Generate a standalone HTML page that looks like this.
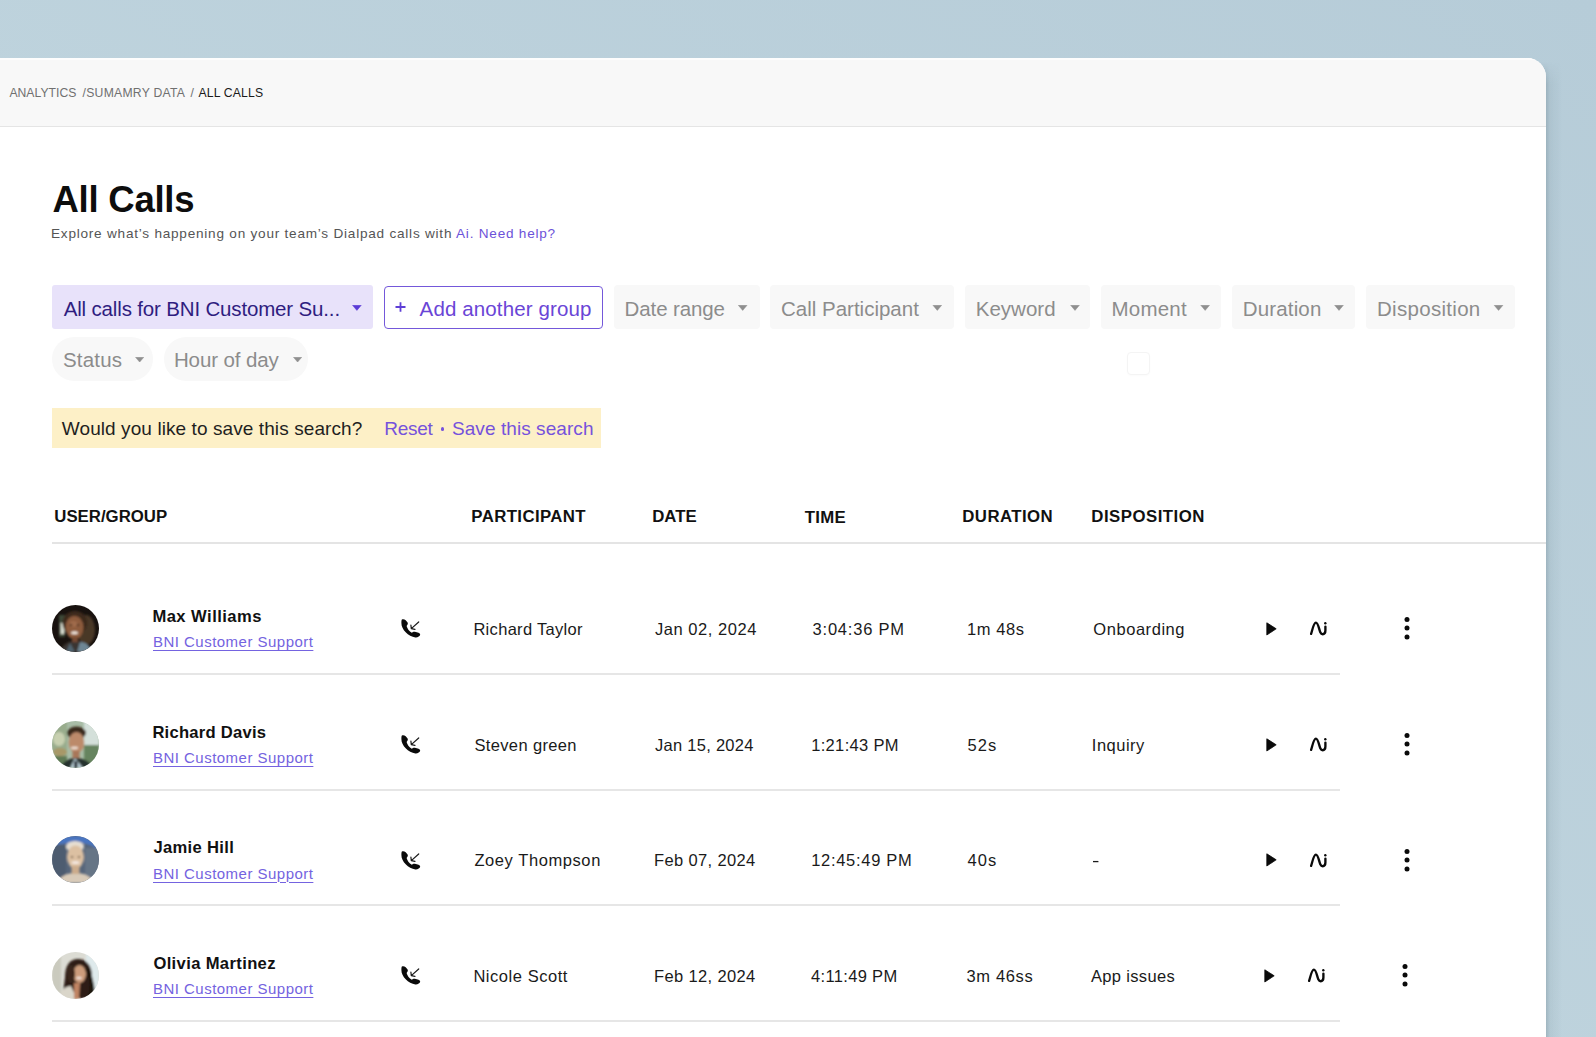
<!DOCTYPE html>
<html><head><meta charset="utf-8"><title>All Calls</title>
<style>
*{margin:0;padding:0;box-sizing:border-box}
html,body{width:1596px;height:1037px;overflow:hidden}
body{background:linear-gradient(to bottom left,#b6ccd8,#bed3dd 55%,#c4d8e0);font-family:"Liberation Sans",sans-serif;position:relative}
.card{position:absolute;left:-30px;top:58px;width:1576.4px;height:1100px;background:#fff;border-top-right-radius:19px;overflow:hidden}
.shadow{position:absolute;left:1540px;top:62px;width:30px;height:1000px;background:linear-gradient(to right,rgba(95,118,130,.30) 0,rgba(95,118,130,.30) 6px,rgba(95,118,130,.10) 10px,rgba(95,118,130,0) 22px);-webkit-mask-image:linear-gradient(to bottom,transparent,#000 22px)}
.hdr{position:absolute;left:0;top:0;width:100%;height:69px;background:#f8f8f8;border-bottom:1.3px solid #e5e5e5;box-shadow:inset 0 2px 0 #fdfdfd}
.t{position:absolute;white-space:nowrap}
.box{position:absolute;display:block}
.av{width:47px;height:47px;border-radius:50%;overflow:hidden}
.av svg{display:block}
</style></head><body>
<div class="shadow"></div>
<div class="card"><div class="hdr"></div></div>
<div class="box" style="left:52.0px;top:285.2px;width:321.4px;height:43.9px;background:#e8e2fa;border-radius:3px;"></div>
<svg class="box" style="left:352.4px;top:305.0px" width="9.8" height="5.6" viewBox="0 0 10 6"><path d="M0.3 0.3 L9.7 0.3 L5 5.8 Z" fill="#5a3bd6" stroke="#5a3bd6" stroke-width="0.5" stroke-linejoin="round"/></svg>
<div class="box" style="left:383.8px;top:285.5px;width:218.8px;height:43.9px;background:#fff;border-radius:4px;border:1.8px solid #7458da;box-sizing:border-box;"></div>
<svg class="box" style="left:395.4px;top:301.6px" width="11" height="10" viewBox="0 0 11 10"><path d="M5.5 0.3V9.7M0.5 5H10.5" stroke="#5e3ed6" stroke-width="1.8"/></svg>
<div class="box" style="left:613.6px;top:285.3px;width:146.1px;height:44.0px;background:#f8f8f8;border-radius:4px;"></div>
<svg class="box" style="left:737.0px;top:305.0px" width="11.4" height="5.6" viewBox="0 0 10 6"><path d="M0.3 0.3 L9.7 0.3 L5 5.8 Z" fill="#8f8f8f" stroke="#8f8f8f" stroke-width="0.5" stroke-linejoin="round"/></svg>
<div class="box" style="left:770.0px;top:285.3px;width:183.5px;height:44.0px;background:#f8f8f8;border-radius:4px;"></div>
<svg class="box" style="left:932.4px;top:305.0px" width="10.6" height="5.6" viewBox="0 0 10 6"><path d="M0.3 0.3 L9.7 0.3 L5 5.8 Z" fill="#8f8f8f" stroke="#8f8f8f" stroke-width="0.5" stroke-linejoin="round"/></svg>
<div class="box" style="left:965.0px;top:285.3px;width:125.3px;height:44.0px;background:#f8f8f8;border-radius:4px;"></div>
<svg class="box" style="left:1069.5px;top:305.0px" width="10.0" height="5.6" viewBox="0 0 10 6"><path d="M0.3 0.3 L9.7 0.3 L5 5.8 Z" fill="#8f8f8f" stroke="#8f8f8f" stroke-width="0.5" stroke-linejoin="round"/></svg>
<div class="box" style="left:1101.0px;top:285.3px;width:120.0px;height:44.0px;background:#f8f8f8;border-radius:4px;"></div>
<svg class="box" style="left:1199.7px;top:305.0px" width="10.3" height="5.6" viewBox="0 0 10 6"><path d="M0.3 0.3 L9.7 0.3 L5 5.8 Z" fill="#8f8f8f" stroke="#8f8f8f" stroke-width="0.5" stroke-linejoin="round"/></svg>
<div class="box" style="left:1232.0px;top:285.3px;width:122.7px;height:44.0px;background:#f8f8f8;border-radius:4px;"></div>
<svg class="box" style="left:1334.0px;top:305.0px" width="10.0" height="5.6" viewBox="0 0 10 6"><path d="M0.3 0.3 L9.7 0.3 L5 5.8 Z" fill="#8f8f8f" stroke="#8f8f8f" stroke-width="0.5" stroke-linejoin="round"/></svg>
<div class="box" style="left:1365.7px;top:285.3px;width:148.9px;height:44.0px;background:#f8f8f8;border-radius:4px;"></div>
<svg class="box" style="left:1492.5px;top:305.0px" width="11.1" height="5.6" viewBox="0 0 10 6"><path d="M0.3 0.3 L9.7 0.3 L5 5.8 Z" fill="#8f8f8f" stroke="#8f8f8f" stroke-width="0.5" stroke-linejoin="round"/></svg>
<div class="box" style="left:52.4px;top:337.0px;width:100.4px;height:44.0px;background:#f8f8f8;border-radius:22px;"></div>
<svg class="box" style="left:134.6px;top:356.7px" width="9.3" height="5.3" viewBox="0 0 10 6"><path d="M0.3 0.3 L9.7 0.3 L5 5.8 Z" fill="#8f8f8f" stroke="#8f8f8f" stroke-width="0.5" stroke-linejoin="round"/></svg>
<div class="box" style="left:163.6px;top:337.0px;width:144.8px;height:44.0px;background:#f8f8f8;border-radius:22px;"></div>
<svg class="box" style="left:293.3px;top:356.7px" width="9.2" height="5.3" viewBox="0 0 10 6"><path d="M0.3 0.3 L9.7 0.3 L5 5.8 Z" fill="#8f8f8f" stroke="#8f8f8f" stroke-width="0.5" stroke-linejoin="round"/></svg>
<div class="box" style="left:1127px;top:352px;width:23px;height:23px;border:1px solid #f4f4f4;border-radius:4px;box-shadow:0 1px 2px rgba(0,0,0,.02)"></div>
<div class="box" style="left:51.6px;top:407.7px;width:549.8px;height:40.0px;background:#fdf0c7;border-radius:0px;"></div>
<div class="box" style="left:440.5px;top:427px;width:3.5px;height:3.5px;border-radius:50%;background:#7652dc"></div>
<div class="box" style="left:52px;top:542.2px;width:1494px;height:2px;background:#e4e4e4"></div>
<div class="box" style="left:52px;top:672.8px;width:1288.3px;height:2px;background:#e6e6e6"></div>
<div class="box av" style="left:51.7px;top:605.0px"><svg width="47" height="47" viewBox="0 0 47 47"><defs><filter id="bl1" x="-20%" y="-20%" width="140%" height="140%"><feGaussianBlur stdDeviation="1.0"/></filter></defs><rect width="47" height="47" fill="#18120f"/><g filter="url(#bl1)"><rect x="7" y="10" width="6" height="22" fill="#3e4838"/><rect x="8.5" y="18" width="4" height="11" fill="#d8dcd0"/><ellipse cx="34" cy="25" rx="9" ry="15" fill="#4a3828"/><path d="M8 47 C10 39 17 36 23 36 C30 36 37 38 40 47 Z" fill="#3a3430"/><path d="M25 47 L28 37 C33 37 38 40 41 47 Z" fill="#6e8694"/><path d="M14 47 L18 38 L23 47 Z" fill="#506470"/><ellipse cx="23" cy="18" rx="12.5" ry="12" fill="#3e2c1e"/><ellipse cx="22.5" cy="22.5" rx="9" ry="11.5" fill="#8e5c3e"/><ellipse cx="21.5" cy="19" rx="4" ry="3" fill="#a06c4c"/><ellipse cx="22.5" cy="27.8" rx="3.4" ry="1.5" fill="#f0e6de"/><ellipse cx="19" cy="20" rx="1.3" ry="0.8" fill="#2a1a12"/><ellipse cx="26" cy="20" rx="1.3" ry="0.8" fill="#2a1a12"/><rect x="20" y="32" width="6" height="5" fill="#764a30"/></g></svg>
</div>
<svg class="box" style="left:399.7px;top:618.3px" width="22" height="22" viewBox="0 0 22 22"><path d="M1.9 1.6 C3.8 0.4 6.6 2.6 7.6 4.6 C8.2 5.8 7.6 7.0 6.6 8.0 C7.4 10.8 9.2 13.4 11.8 14.8 C12.4 14.2 13.6 13.5 14.8 13.7 C17.5 14.2 20.2 15.0 20.2 16.6 C20.0 18.5 17.5 19.6 15.4 19.4 C8.5 18.5 1.2 11.5 1.4 5.0 C1.4 3.5 1.5 2.2 1.9 1.6 Z" fill="#0a0a0a"/><path d="M18.7 4.0 L11.3 10.6 M10.9 7.1 L11.3 10.6 L15.0 11.4" fill="none" stroke="#1a1a1a" stroke-width="1.2" stroke-linecap="round" stroke-linejoin="round"/></svg>
<svg class="box" style="left:1265.6px;top:621.8px" width="11" height="14" viewBox="0 0 11 14"><path d="M0.8 0.8 L10.2 6.8 L0.8 13 Z" fill="#0a0a0a" stroke="#0a0a0a" stroke-width="0.8" stroke-linejoin="round"/></svg>
<svg class="box" style="left:1309.1px;top:620.3px" width="20" height="18" viewBox="0 0 20 18"><path d="M2.1 13.9 C3.4 10 4.6 2.6 6.9 2.6 C9.1 2.6 10.1 9.6 11.3 12.3 C12 13.8 12.8 14.2 13.7 14.2 C15.3 14.2 16.4 13.1 16.4 10.6 L16.4 6.6" fill="none" stroke="#0a0a0a" stroke-width="2.35" stroke-linecap="round" stroke-linejoin="round"/><circle cx="16.3" cy="3.2" r="1.2" fill="#0a0a0a"/></svg>
<svg class="box" style="left:1403.0px;top:616.2px" width="8" height="24" viewBox="0 0 8 24"><circle cx="4" cy="3.5" r="2.5" fill="#0a0a0a"/><circle cx="4" cy="12.1" r="2.5" fill="#0a0a0a"/><circle cx="4" cy="20.9" r="2.5" fill="#0a0a0a"/></svg>
<div class="box" style="left:52px;top:788.5px;width:1288.3px;height:2px;background:#e6e6e6"></div>
<div class="box av" style="left:51.7px;top:720.7px">
<svg width="47" height="47" viewBox="0 0 47 47"><defs><filter id="bl2" x="-20%" y="-20%" width="140%" height="140%"><feGaussianBlur stdDeviation="1.3"/></filter></defs><rect width="47" height="47" fill="#a8bca6"/><g filter="url(#bl2)"><rect x="0" y="0" width="15" height="47" fill="#98ac8c"/><ellipse cx="7" cy="18" rx="6" ry="7" fill="#c8d0b0"/><ellipse cx="8" cy="31" rx="7" ry="4" fill="#a89868"/><rect x="0" y="35" width="15" height="12" fill="#5e7a54"/><rect x="32" y="0" width="15" height="24" fill="#d4e0da"/><rect x="32" y="24" width="15" height="23" fill="#66845e"/><path d="M8 47 C11 40 18 37 23.5 37 C30 37 37 39 41 47 Z" fill="#26322e"/><path d="M18 47 L23 37 L31 47 Z" fill="#b4c8d0"/><rect x="22.3" y="40" width="3" height="7" fill="#101820"/><ellipse cx="24.5" cy="12" rx="9.5" ry="6.5" fill="#3a2a1e"/><ellipse cx="24.5" cy="21.5" rx="7.8" ry="10.5" fill="#bc8a6a"/><ellipse cx="22.5" cy="27" rx="3.6" ry="1.4" fill="#ecdcd0"/><rect x="20.5" y="30" width="7" height="7" fill="#a87658"/></g></svg>
</div>
<svg class="box" style="left:399.7px;top:734.0px" width="22" height="22" viewBox="0 0 22 22"><path d="M1.9 1.6 C3.8 0.4 6.6 2.6 7.6 4.6 C8.2 5.8 7.6 7.0 6.6 8.0 C7.4 10.8 9.2 13.4 11.8 14.8 C12.4 14.2 13.6 13.5 14.8 13.7 C17.5 14.2 20.2 15.0 20.2 16.6 C20.0 18.5 17.5 19.6 15.4 19.4 C8.5 18.5 1.2 11.5 1.4 5.0 C1.4 3.5 1.5 2.2 1.9 1.6 Z" fill="#0a0a0a"/><path d="M18.7 4.0 L11.3 10.6 M10.9 7.1 L11.3 10.6 L15.0 11.4" fill="none" stroke="#1a1a1a" stroke-width="1.2" stroke-linecap="round" stroke-linejoin="round"/></svg>
<svg class="box" style="left:1265.6px;top:737.5px" width="11" height="14" viewBox="0 0 11 14"><path d="M0.8 0.8 L10.2 6.8 L0.8 13 Z" fill="#0a0a0a" stroke="#0a0a0a" stroke-width="0.8" stroke-linejoin="round"/></svg>
<svg class="box" style="left:1309.1px;top:736.0px" width="20" height="18" viewBox="0 0 20 18"><path d="M2.1 13.9 C3.4 10 4.6 2.6 6.9 2.6 C9.1 2.6 10.1 9.6 11.3 12.3 C12 13.8 12.8 14.2 13.7 14.2 C15.3 14.2 16.4 13.1 16.4 10.6 L16.4 6.6" fill="none" stroke="#0a0a0a" stroke-width="2.35" stroke-linecap="round" stroke-linejoin="round"/><circle cx="16.3" cy="3.2" r="1.2" fill="#0a0a0a"/></svg>
<svg class="box" style="left:1403.0px;top:731.9px" width="8" height="24" viewBox="0 0 8 24"><circle cx="4" cy="3.5" r="2.5" fill="#0a0a0a"/><circle cx="4" cy="12.1" r="2.5" fill="#0a0a0a"/><circle cx="4" cy="20.9" r="2.5" fill="#0a0a0a"/></svg>
<div class="box" style="left:52px;top:904.2px;width:1288.3px;height:2px;background:#e6e6e6"></div>
<div class="box av" style="left:51.7px;top:836.4px">
<svg width="47" height="47" viewBox="0 0 47 47"><defs><filter id="bl3" x="-20%" y="-20%" width="140%" height="140%"><feGaussianBlur stdDeviation="1.3"/></filter></defs><rect width="47" height="47" fill="#56657a"/><g filter="url(#bl3)"><path d="M0 0 H47 V14 C38 8 30 6 20 7 L0 9 Z" fill="#4a74c0"/><rect x="0" y="9" width="14" height="38" fill="#4e5c70"/><rect x="33" y="12" width="14" height="35" fill="#667486"/><path d="M5 47 C8 40 15 37 23.5 37 C32 37 39 40 42 47 Z" fill="#d8cab8"/><ellipse cx="23" cy="10.5" rx="9" ry="5.5" fill="#e6ded2"/><ellipse cx="23.5" cy="21" rx="8.5" ry="11.5" fill="#dcc0a2"/><rect x="19.5" y="30" width="8" height="8" fill="#ccac8c"/><ellipse cx="23.5" cy="26.5" rx="4" ry="1.5" fill="#f4e8e0"/><ellipse cx="20" cy="21" rx="1.3" ry="0.7" fill="#5a4030"/><ellipse cx="27" cy="21" rx="1.3" ry="0.7" fill="#5a4030"/></g></svg>
</div>
<svg class="box" style="left:399.7px;top:849.7px" width="22" height="22" viewBox="0 0 22 22"><path d="M1.9 1.6 C3.8 0.4 6.6 2.6 7.6 4.6 C8.2 5.8 7.6 7.0 6.6 8.0 C7.4 10.8 9.2 13.4 11.8 14.8 C12.4 14.2 13.6 13.5 14.8 13.7 C17.5 14.2 20.2 15.0 20.2 16.6 C20.0 18.5 17.5 19.6 15.4 19.4 C8.5 18.5 1.2 11.5 1.4 5.0 C1.4 3.5 1.5 2.2 1.9 1.6 Z" fill="#0a0a0a"/><path d="M18.7 4.0 L11.3 10.6 M10.9 7.1 L11.3 10.6 L15.0 11.4" fill="none" stroke="#1a1a1a" stroke-width="1.2" stroke-linecap="round" stroke-linejoin="round"/></svg>
<svg class="box" style="left:1265.6px;top:853.2px" width="11" height="14" viewBox="0 0 11 14"><path d="M0.8 0.8 L10.2 6.8 L0.8 13 Z" fill="#0a0a0a" stroke="#0a0a0a" stroke-width="0.8" stroke-linejoin="round"/></svg>
<svg class="box" style="left:1309.1px;top:851.7px" width="20" height="18" viewBox="0 0 20 18"><path d="M2.1 13.9 C3.4 10 4.6 2.6 6.9 2.6 C9.1 2.6 10.1 9.6 11.3 12.3 C12 13.8 12.8 14.2 13.7 14.2 C15.3 14.2 16.4 13.1 16.4 10.6 L16.4 6.6" fill="none" stroke="#0a0a0a" stroke-width="2.35" stroke-linecap="round" stroke-linejoin="round"/><circle cx="16.3" cy="3.2" r="1.2" fill="#0a0a0a"/></svg>
<svg class="box" style="left:1403.0px;top:847.6px" width="8" height="24" viewBox="0 0 8 24"><circle cx="4" cy="3.5" r="2.5" fill="#0a0a0a"/><circle cx="4" cy="12.1" r="2.5" fill="#0a0a0a"/><circle cx="4" cy="20.9" r="2.5" fill="#0a0a0a"/></svg>
<div class="box" style="left:52px;top:1019.9px;width:1288.3px;height:2px;background:#e6e6e6"></div>
<div class="box av" style="left:51.7px;top:952.1px">
<svg width="47" height="47" viewBox="0 0 47 47"><defs><filter id="bl4" x="-20%" y="-20%" width="140%" height="140%"><feGaussianBlur stdDeviation="1.2"/></filter></defs><rect width="47" height="47" fill="#dcdcd4"/><g filter="url(#bl4)"><rect x="34" y="0" width="13" height="47" fill="#dfeaec"/><rect x="0" y="0" width="9" height="47" fill="#cacabe"/><path d="M11 40 L13 26 C13 13 18 7 26 7 C34 7 40 13 40 24 L42 44 L30 47 Z" fill="#2e1f16"/><path d="M6 47 C8 38 14 34 19 34 L25 47 Z" fill="#dad6ca"/><ellipse cx="27.5" cy="22" rx="6.5" ry="9" fill="#cc9c7c"/><path d="M22 31 L28 31 L27 47 L22 47 Z" fill="#c08464"/><ellipse cx="27" cy="26" rx="2.8" ry="1.2" fill="#f2e4dc"/><path d="M33 18 C39 26 39 40 34 47 L42 47 C44 38 41 24 36 16 Z" fill="#1c130e"/><ellipse cx="19" cy="22" rx="4" ry="9" fill="#3a281c"/></g></svg>
</div>
<svg class="box" style="left:399.7px;top:965.4px" width="22" height="22" viewBox="0 0 22 22"><path d="M1.9 1.6 C3.8 0.4 6.6 2.6 7.6 4.6 C8.2 5.8 7.6 7.0 6.6 8.0 C7.4 10.8 9.2 13.4 11.8 14.8 C12.4 14.2 13.6 13.5 14.8 13.7 C17.5 14.2 20.2 15.0 20.2 16.6 C20.0 18.5 17.5 19.6 15.4 19.4 C8.5 18.5 1.2 11.5 1.4 5.0 C1.4 3.5 1.5 2.2 1.9 1.6 Z" fill="#0a0a0a"/><path d="M18.7 4.0 L11.3 10.6 M10.9 7.1 L11.3 10.6 L15.0 11.4" fill="none" stroke="#1a1a1a" stroke-width="1.2" stroke-linecap="round" stroke-linejoin="round"/></svg>
<svg class="box" style="left:1263.8px;top:968.9px" width="11" height="14" viewBox="0 0 11 14"><path d="M0.8 0.8 L10.2 6.8 L0.8 13 Z" fill="#0a0a0a" stroke="#0a0a0a" stroke-width="0.8" stroke-linejoin="round"/></svg>
<svg class="box" style="left:1307.3px;top:967.4px" width="20" height="18" viewBox="0 0 20 18"><path d="M2.1 13.9 C3.4 10 4.6 2.6 6.9 2.6 C9.1 2.6 10.1 9.6 11.3 12.3 C12 13.8 12.8 14.2 13.7 14.2 C15.3 14.2 16.4 13.1 16.4 10.6 L16.4 6.6" fill="none" stroke="#0a0a0a" stroke-width="2.35" stroke-linecap="round" stroke-linejoin="round"/><circle cx="16.3" cy="3.2" r="1.2" fill="#0a0a0a"/></svg>
<svg class="box" style="left:1401.2px;top:963.3px" width="8" height="24" viewBox="0 0 8 24"><circle cx="4" cy="3.5" r="2.5" fill="#0a0a0a"/><circle cx="4" cy="12.1" r="2.5" fill="#0a0a0a"/><circle cx="4" cy="20.9" r="2.5" fill="#0a0a0a"/></svg>
<div id="bc1" class="t" style="left:9.40px;top:87.07px;font-size:12.20px;line-height:12.20px;font-weight:400;color:#707070;letter-spacing:0.025px;">ANALYTICS</div>
<div id="bc2" class="t" style="left:82.60px;top:87.07px;font-size:12.20px;line-height:12.20px;font-weight:400;color:#707070;letter-spacing:0.250px;">/SUMAMRY DATA</div>
<div id="bc3" class="t" style="left:190.50px;top:87.07px;font-size:12.20px;line-height:12.20px;font-weight:400;color:#707070;letter-spacing:0.000px;">/</div>
<div id="bc4" class="t" style="left:198.50px;top:87.07px;font-size:12.20px;line-height:12.20px;font-weight:400;color:#1a1a1a;letter-spacing:0.175px;">ALL CALLS</div>
<div id="title" class="t" style="left:52.50px;top:182.30px;font-size:36.50px;line-height:36.50px;font-weight:700;color:#0d0d0d;letter-spacing:-0.250px;">All Calls</div>
<div id="sub" class="t" style="left:51.00px;top:227.19px;font-size:13.60px;line-height:13.60px;font-weight:400;color:#555;letter-spacing:0.764px;">Explore what’s happening on your team’s Dialpad calls with <span style="color:#6c52d9">Ai. Need help?</span></div>
<div id="ch1" class="t" style="left:63.70px;top:299.05px;font-size:20.50px;line-height:20.50px;font-weight:400;color:#2f1d80;letter-spacing:-0.161px;">All calls for BNI Customer Su...</div>
<div id="ch2" class="t" style="left:419.60px;top:299.05px;font-size:20.50px;line-height:20.50px;font-weight:400;color:#6a45d6;letter-spacing:0.125px;">Add another group</div>
<div id="ch3" class="t" style="left:624.60px;top:299.05px;font-size:20.50px;line-height:20.50px;font-weight:400;color:#8c8c8c;letter-spacing:-0.111px;">Date range</div>
<div id="ch4" class="t" style="left:781.00px;top:299.05px;font-size:20.50px;line-height:20.50px;font-weight:400;color:#8c8c8c;letter-spacing:0.000px;">Call Participant</div>
<div id="ch5" class="t" style="left:975.80px;top:299.05px;font-size:20.50px;line-height:20.50px;font-weight:400;color:#8c8c8c;letter-spacing:0.000px;">Keyword</div>
<div id="ch6" class="t" style="left:1111.60px;top:299.05px;font-size:20.50px;line-height:20.50px;font-weight:400;color:#8c8c8c;letter-spacing:0.200px;">Moment</div>
<div id="ch7" class="t" style="left:1242.80px;top:299.05px;font-size:20.50px;line-height:20.50px;font-weight:400;color:#8c8c8c;letter-spacing:0.143px;">Duration</div>
<div id="ch8" class="t" style="left:1377.00px;top:299.05px;font-size:20.50px;line-height:20.50px;font-weight:400;color:#8c8c8c;letter-spacing:0.300px;">Disposition</div>
<div id="ch9" class="t" style="left:62.90px;top:349.95px;font-size:20.50px;line-height:20.50px;font-weight:400;color:#8c8c8c;letter-spacing:0.200px;">Status</div>
<div id="ch10" class="t" style="left:173.90px;top:349.95px;font-size:20.50px;line-height:20.50px;font-weight:400;color:#8c8c8c;letter-spacing:-0.100px;">Hour of day</div>
<div id="bn1" class="t" style="left:61.80px;top:418.92px;font-size:19.00px;line-height:19.00px;font-weight:400;color:#1f1f1f;letter-spacing:0.088px;">Would you like to save this search?</div>
<div id="bn2" class="t" style="left:384.20px;top:418.92px;font-size:19.00px;line-height:19.00px;font-weight:400;color:#7652dc;letter-spacing:-0.250px;">Reset</div>
<div id="bn3" class="t" style="left:452.00px;top:418.92px;font-size:19.00px;line-height:19.00px;font-weight:400;color:#7652dc;letter-spacing:0.067px;">Save this search</div>
<div id="th0" class="t" style="left:54.30px;top:508.98px;font-size:16.80px;line-height:16.80px;font-weight:700;color:#111;letter-spacing:-0.000px;">USER/GROUP</div>
<div id="th1" class="t" style="left:471.30px;top:508.98px;font-size:16.80px;line-height:16.80px;font-weight:700;color:#111;letter-spacing:0.400px;">PARTICIPANT</div>
<div id="th2" class="t" style="left:652.20px;top:508.98px;font-size:16.80px;line-height:16.80px;font-weight:700;color:#111;letter-spacing:-0.000px;">DATE</div>
<div id="th3" class="t" style="left:804.70px;top:509.78px;font-size:16.80px;line-height:16.80px;font-weight:700;color:#111;letter-spacing:0.333px;">TIME</div>
<div id="th4" class="t" style="left:962.30px;top:508.98px;font-size:16.80px;line-height:16.80px;font-weight:700;color:#111;letter-spacing:0.429px;">DURATION</div>
<div id="th5" class="t" style="left:1091.30px;top:508.98px;font-size:16.80px;line-height:16.80px;font-weight:700;color:#111;letter-spacing:0.500px;">DISPOSITION</div>
<div id="nm0" class="t" style="left:152.40px;top:608.85px;font-size:16.60px;line-height:16.60px;font-weight:700;color:#111;letter-spacing:0.455px;">Max Williams</div>
<div id="lk0" class="t" style="left:153.00px;top:634.10px;font-size:15.00px;line-height:15.00px;font-weight:400;color:#7463e0;letter-spacing:0.474px;text-decoration:underline;text-underline-offset:3px;text-decoration-thickness:1px;">BNI Customer Support</div>
<div id="pt0" class="t" style="left:473.40px;top:620.83px;font-size:16.50px;line-height:16.50px;font-weight:400;color:#1a1a1a;letter-spacing:0.308px;">Richard Taylor</div>
<div id="dt0" class="t" style="left:655.00px;top:620.83px;font-size:16.50px;line-height:16.50px;font-weight:400;color:#1a1a1a;letter-spacing:0.545px;">Jan 02, 2024</div>
<div id="tm0" class="t" style="left:812.60px;top:620.83px;font-size:16.50px;line-height:16.50px;font-weight:400;color:#1a1a1a;letter-spacing:0.778px;">3:04:36 PM</div>
<div id="du0" class="t" style="left:967.00px;top:620.83px;font-size:16.50px;line-height:16.50px;font-weight:400;color:#1a1a1a;letter-spacing:0.600px;">1m 48s</div>
<div id="ds0" class="t" style="left:1093.30px;top:620.83px;font-size:16.50px;line-height:16.50px;font-weight:400;color:#1a1a1a;letter-spacing:0.556px;">Onboarding</div>
<div id="nm1" class="t" style="left:152.40px;top:724.55px;font-size:16.60px;line-height:16.60px;font-weight:700;color:#111;letter-spacing:0.250px;">Richard Davis</div>
<div id="lk1" class="t" style="left:153.00px;top:749.80px;font-size:15.00px;line-height:15.00px;font-weight:400;color:#7463e0;letter-spacing:0.474px;text-decoration:underline;text-underline-offset:3px;text-decoration-thickness:1px;">BNI Customer Support</div>
<div id="pt1" class="t" style="left:474.40px;top:736.53px;font-size:16.50px;line-height:16.50px;font-weight:400;color:#1a1a1a;letter-spacing:0.364px;">Steven green</div>
<div id="dt1" class="t" style="left:655.00px;top:736.53px;font-size:16.50px;line-height:16.50px;font-weight:400;color:#1a1a1a;letter-spacing:0.273px;">Jan 15, 2024</div>
<div id="tm1" class="t" style="left:811.20px;top:736.53px;font-size:16.50px;line-height:16.50px;font-weight:400;color:#1a1a1a;letter-spacing:0.333px;">1:21:43 PM</div>
<div id="du1" class="t" style="left:967.60px;top:736.53px;font-size:16.50px;line-height:16.50px;font-weight:400;color:#1a1a1a;letter-spacing:1.000px;">52s</div>
<div id="ds1" class="t" style="left:1091.80px;top:736.53px;font-size:16.50px;line-height:16.50px;font-weight:400;color:#1a1a1a;letter-spacing:0.500px;">Inquiry</div>
<div id="nm2" class="t" style="left:153.40px;top:840.25px;font-size:16.60px;line-height:16.60px;font-weight:700;color:#111;letter-spacing:0.333px;">Jamie Hill</div>
<div id="lk2" class="t" style="left:153.00px;top:865.50px;font-size:15.00px;line-height:15.00px;font-weight:400;color:#7463e0;letter-spacing:0.474px;text-decoration:underline;text-underline-offset:3px;text-decoration-thickness:1px;">BNI Customer Support</div>
<div id="pt2" class="t" style="left:474.40px;top:852.23px;font-size:16.50px;line-height:16.50px;font-weight:400;color:#1a1a1a;letter-spacing:0.583px;">Zoey Thompson</div>
<div id="dt2" class="t" style="left:654.00px;top:852.23px;font-size:16.50px;line-height:16.50px;font-weight:400;color:#1a1a1a;letter-spacing:0.364px;">Feb 07, 2024</div>
<div id="tm2" class="t" style="left:811.20px;top:852.23px;font-size:16.50px;line-height:16.50px;font-weight:400;color:#1a1a1a;letter-spacing:0.700px;">12:45:49 PM</div>
<div id="du2" class="t" style="left:967.60px;top:852.23px;font-size:16.50px;line-height:16.50px;font-weight:400;color:#1a1a1a;letter-spacing:1.000px;">40s</div>
<div id="ds2" class="t" style="left:1091.80px;top:852.23px;font-size:16.50px;line-height:16.50px;font-weight:400;color:#1a1a1a;letter-spacing:0.000px;transform:scaleX(1.35);transform-origin:left;">-</div>
<div id="nm3" class="t" style="left:153.40px;top:955.95px;font-size:16.60px;line-height:16.60px;font-weight:700;color:#111;letter-spacing:0.357px;">Olivia Martinez</div>
<div id="lk3" class="t" style="left:153.00px;top:981.20px;font-size:15.00px;line-height:15.00px;font-weight:400;color:#7463e0;letter-spacing:0.474px;text-decoration:underline;text-underline-offset:3px;text-decoration-thickness:1px;">BNI Customer Support</div>
<div id="pt3" class="t" style="left:473.40px;top:967.93px;font-size:16.50px;line-height:16.50px;font-weight:400;color:#1a1a1a;letter-spacing:0.545px;">Nicole Scott</div>
<div id="dt3" class="t" style="left:654.00px;top:967.93px;font-size:16.50px;line-height:16.50px;font-weight:400;color:#1a1a1a;letter-spacing:0.364px;">Feb 12, 2024</div>
<div id="tm3" class="t" style="left:811.00px;top:967.93px;font-size:16.50px;line-height:16.50px;font-weight:400;color:#1a1a1a;letter-spacing:0.333px;">4:11:49 PM</div>
<div id="du3" class="t" style="left:966.40px;top:967.93px;font-size:16.50px;line-height:16.50px;font-weight:400;color:#1a1a1a;letter-spacing:0.667px;">3m 46ss</div>
<div id="ds3" class="t" style="left:1091.00px;top:967.93px;font-size:16.50px;line-height:16.50px;font-weight:400;color:#1a1a1a;letter-spacing:0.333px;">App issues</div>
</body></html>
